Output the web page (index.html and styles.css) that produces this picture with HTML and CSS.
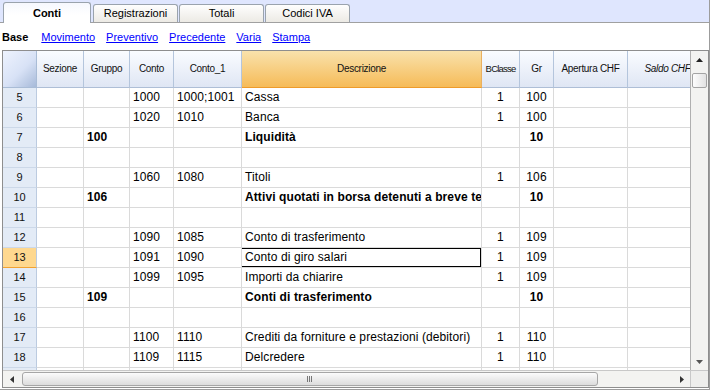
FILE: index.html
```html
<!DOCTYPE html>
<html lang="it">
<head>
<meta charset="utf-8">
<title>Conti</title>
<link rel="stylesheet" href="styles.css">
</head>
<body>
<div class="app">
  <div class="tabs">
    <div class="tab active">Conti</div>
    <div class="tab">Registrazioni</div>
    <div class="tab">Totali</div>
    <div class="tab">Codici IVA</div>
  </div>
  <div class="subnav">
    <span class="base">Base</span>
    <a href="#">Movimento</a>
    <a href="#">Preventivo</a>
    <a href="#">Precedente</a>
    <a href="#">Varia</a>
    <a href="#">Stampa</a>
  </div>
  <div class="frame">
    <div class="mainrow">
      <div class="viewport">
        <div class="row head">
          <div class="c corner"></div>
          <div class="c h">Sezione</div>
          <div class="c h">Gruppo</div>
          <div class="c h">Conto</div>
          <div class="c h">Conto_1</div>
          <div class="c h hsel">Descrizione</div>
          <div class="c h tight">BClasse</div>
          <div class="c h">Gr</div>
          <div class="c h">Apertura CHF</div>
          <div class="c h it">Saldo CHF</div>
        </div>
        <div class="row"><div class="c rn">5</div><div class="c"></div><div class="c"></div><div class="c l">1000</div><div class="c l">1000;1001</div><div class="c l">Cassa</div><div class="c ctr">1</div><div class="c ctr">100</div><div class="c"></div><div class="c"></div></div>
        <div class="row"><div class="c rn">6</div><div class="c"></div><div class="c"></div><div class="c l">1020</div><div class="c l">1010</div><div class="c l">Banca</div><div class="c ctr">1</div><div class="c ctr">100</div><div class="c"></div><div class="c"></div></div>
        <div class="row"><div class="c rn">7</div><div class="c"></div><div class="c l b">100</div><div class="c"></div><div class="c"></div><div class="c l b">Liquidità</div><div class="c"></div><div class="c ctr b">10</div><div class="c"></div><div class="c"></div></div>
        <div class="row"><div class="c rn">8</div><div class="c"></div><div class="c"></div><div class="c"></div><div class="c"></div><div class="c"></div><div class="c"></div><div class="c"></div><div class="c"></div><div class="c"></div></div>
        <div class="row"><div class="c rn">9</div><div class="c"></div><div class="c"></div><div class="c l">1060</div><div class="c l">1080</div><div class="c l">Titoli</div><div class="c ctr">1</div><div class="c ctr">106</div><div class="c"></div><div class="c"></div></div>
        <div class="row"><div class="c rn">10</div><div class="c"></div><div class="c l b">106</div><div class="c"></div><div class="c"></div><div class="c l b">Attivi quotati in borsa detenuti a breve termine</div><div class="c"></div><div class="c ctr b">10</div><div class="c"></div><div class="c"></div></div>
        <div class="row"><div class="c rn">11</div><div class="c"></div><div class="c"></div><div class="c"></div><div class="c"></div><div class="c"></div><div class="c"></div><div class="c"></div><div class="c"></div><div class="c"></div></div>
        <div class="row"><div class="c rn">12</div><div class="c"></div><div class="c"></div><div class="c l">1090</div><div class="c l">1085</div><div class="c l">Conto di trasferimento</div><div class="c ctr">1</div><div class="c ctr">109</div><div class="c"></div><div class="c"></div></div>
        <div class="row"><div class="c rn rnsel">13</div><div class="c"></div><div class="c"></div><div class="c l">1091</div><div class="c l">1090</div><div class="c l sel">Conto di giro salari</div><div class="c ctr">1</div><div class="c ctr">109</div><div class="c"></div><div class="c"></div></div>
        <div class="row"><div class="c rn">14</div><div class="c"></div><div class="c"></div><div class="c l">1099</div><div class="c l">1095</div><div class="c l">Importi da chiarire</div><div class="c ctr">1</div><div class="c ctr">109</div><div class="c"></div><div class="c"></div></div>
        <div class="row"><div class="c rn">15</div><div class="c"></div><div class="c l b">109</div><div class="c"></div><div class="c"></div><div class="c l b">Conti di trasferimento</div><div class="c"></div><div class="c ctr b">10</div><div class="c"></div><div class="c"></div></div>
        <div class="row"><div class="c rn">16</div><div class="c"></div><div class="c"></div><div class="c"></div><div class="c"></div><div class="c"></div><div class="c"></div><div class="c"></div><div class="c"></div><div class="c"></div></div>
        <div class="row"><div class="c rn">17</div><div class="c"></div><div class="c"></div><div class="c l">1100</div><div class="c l">1110</div><div class="c l">Crediti da forniture e prestazioni (debitori)</div><div class="c ctr">1</div><div class="c ctr">110</div><div class="c"></div><div class="c"></div></div>
        <div class="row"><div class="c rn">18</div><div class="c"></div><div class="c"></div><div class="c l">1109</div><div class="c l">1115</div><div class="c l">Delcredere</div><div class="c ctr">1</div><div class="c ctr">110</div><div class="c"></div><div class="c"></div></div>
        <div class="row"><div class="c rn"></div><div class="c"></div><div class="c"></div><div class="c"></div><div class="c"></div><div class="c"></div><div class="c"></div><div class="c"></div><div class="c"></div><div class="c"></div></div>
      </div>
      <div class="vscroll">
        <div class="vbtn"><svg width="7" height="4" viewBox="0 0 7 4"><polygon points="0,4 7,4 3.5,0" fill="#222"/></svg></div>
        <div class="vtrack"><div class="vthumb"></div></div>
        <div class="vbtn"><svg width="7" height="4" viewBox="0 0 7 4"><polygon points="0,0 7,0 3.5,4" fill="#555"/></svg></div>
      </div>
    </div>
    <div class="hrow">
      <div class="hscroll">
        <div class="hbtn"><svg width="4" height="7" viewBox="0 0 4 7"><polygon points="4,0 4,7 0,3.5" fill="#333"/></svg></div>
        <div class="htrack"><div class="hthumb"><span class="grip"></span></div></div>
        <div class="hbtn"><svg width="4" height="7" viewBox="0 0 4 7"><polygon points="0,0 0,7 4,3.5" fill="#333"/></svg></div>
      </div>
      <div class="scorner"></div>
    </div>
  </div>
</div>
</body>
</html>
```

FILE: styles.css
```css
* { box-sizing: border-box; }
html, body { margin: 0; padding: 0; }
body {
  width: 710px;
  height: 390px;
  overflow: hidden;
  background: #ffffff;
  font-family: "Liberation Sans", Arial, sans-serif;
  color: #000;
}
.app {
  width: 710px;
  height: 390px;
  border-right: 1px solid #9c9c9c;
  border-bottom: 1px solid #9c9c9c;
}
.tabs {
  height: 23px;
  background: #dfe6fe;
  border-bottom: 1px solid #a0a0a0;
  display: flex;
  align-items: flex-end;
  gap: 1px;
  padding-left: 3px;
}
.tab {
  width: 85px;
  height: 18px;
  border: 1px solid #9aa3ad;
  border-bottom: none;
  border-radius: 3px 3px 0 0;
  background: linear-gradient(#fefefe, #eceae4);
  font-size: 11px;
  line-height: 17px;
  text-align: center;
  color: #000;
}
.tab.active {
  width: 88px;
  height: 21px;
  margin-bottom: -1px;
  margin-right: 1px;
  background: linear-gradient(#f6f8fe, #ffffff 60%);
  font-weight: bold;
  line-height: 21px;
}
.subnav {
  height: 27px;
  display: flex;
  align-items: center;
  gap: 11px;
  padding-left: 2px;
  padding-top: 1px;
  font-size: 11px;
}
.subnav .base { font-weight: bold; margin-right: 2px; }
.subnav a { color: #0000ff; text-decoration: underline; }
.frame {
  margin-left: 2px;
  width: 707px;
  border: 1px solid #8e8e8e;
}
.mainrow { display: flex; }
.viewport {
  width: 687px;
  height: 319px;
  overflow: hidden;
}
.row {
  display: grid;
  grid-template-columns: 34px 47px 46px 44px 68px 240px 38px 34px 74px 80px;
  height: 20px;
  width: 705px;
}
.c {
  border-right: 1px solid #dadada;
  border-bottom: 1px solid #dadada;
  font-size: 12px;
  line-height: 19px;
  white-space: nowrap;
  overflow: hidden;
  position: relative;
  letter-spacing: 0.1px;
}
.l { padding-left: 3px; }
.ctr { text-align: center; }
.b { font-weight: bold; }
.rn {
  background: #e3ebf6;
  border-right: 1px solid #bccbe0;
  border-bottom: 1px solid #ccd8e8;
  text-align: center;
  font-size: 11px;
  color: #111;
  letter-spacing: 0;
}
.rnsel {
  background: #fed88f;
  border-bottom: 1px solid #f1a232;
}
.sel::after {
  content: "";
  position: absolute;
  top: 0;
  left: -1px;
  right: 0;
  bottom: 0;
  border: 1px solid #000;
}
.row.head { height: 37px; }
.h {
  background: linear-gradient(#fafcff, #dfe6f4);
  border-right: 1px solid #b4c5dc;
  border-bottom: 1px solid #aebed6;
  font-size: 10px;
  letter-spacing: -0.3px;
  line-height: 36px;
  text-align: center;
  color: #111;
}
.h.tight { letter-spacing: -0.8px; font-size: 9.5px; }
.h.it { font-style: italic; }
.hsel {
  background: linear-gradient(#f9e2ac, #f6bb58);
  border-bottom: 1px solid #ee9b2a;
  border-right: 1px solid #eab060;
}
.corner {
  background: linear-gradient(135deg, #eef3fe 0%, #d8e2f6 55%, #a7bad9 100%);
  border-right: 1px solid #a9bcd6;
  border-bottom: 1px solid #a9bcd6;
}
.vscroll {
  width: 18px;
  height: 319px;
  border-left: 1px solid #b0b0b0;
  background: #f3f3f1;
  display: flex;
  flex-direction: column;
}
.vbtn {
  height: 17px;
  display: flex;
  align-items: center;
  justify-content: center;
}
.vtrack {
  flex: 1;
  padding: 5px 1px 0 1px;
}
.vthumb {
  height: 15px;
  border: 1px solid #a4a4a4;
  border-radius: 2px;
  background: linear-gradient(90deg, #fdfdfd, #e2e2e2);
}
.hrow {
  display: flex;
  height: 17px;
}
.hscroll {
  width: 687px;
  display: flex;
  align-items: center;
  background: #f3f3f1;
  border-top: 1px solid #c8c8c8;
}
.hbtn {
  width: 17px;
  height: 16px;
  display: flex;
  align-items: center;
  justify-content: center;
}
.htrack {
  flex: 1;
  height: 16px;
  padding: 1px 0 1px 2px;
}
.hthumb {
  width: 576px;
  height: 14px;
  border: 1px solid #a6a6a6;
  border-radius: 3px;
  background: linear-gradient(#fbfbfb, #dcdcdc);
  display: flex;
  align-items: center;
  justify-content: center;
}
.grip {
  width: 6px;
  height: 6px;
  background: repeating-linear-gradient(90deg, #777 0 1px, transparent 1px 2px);
}
.scorner {
  width: 18px;
  background: #eeeeec;
  border-top: 1px solid #c8c8c8;
  border-left: 1px solid #c8c8c8;
}
```
